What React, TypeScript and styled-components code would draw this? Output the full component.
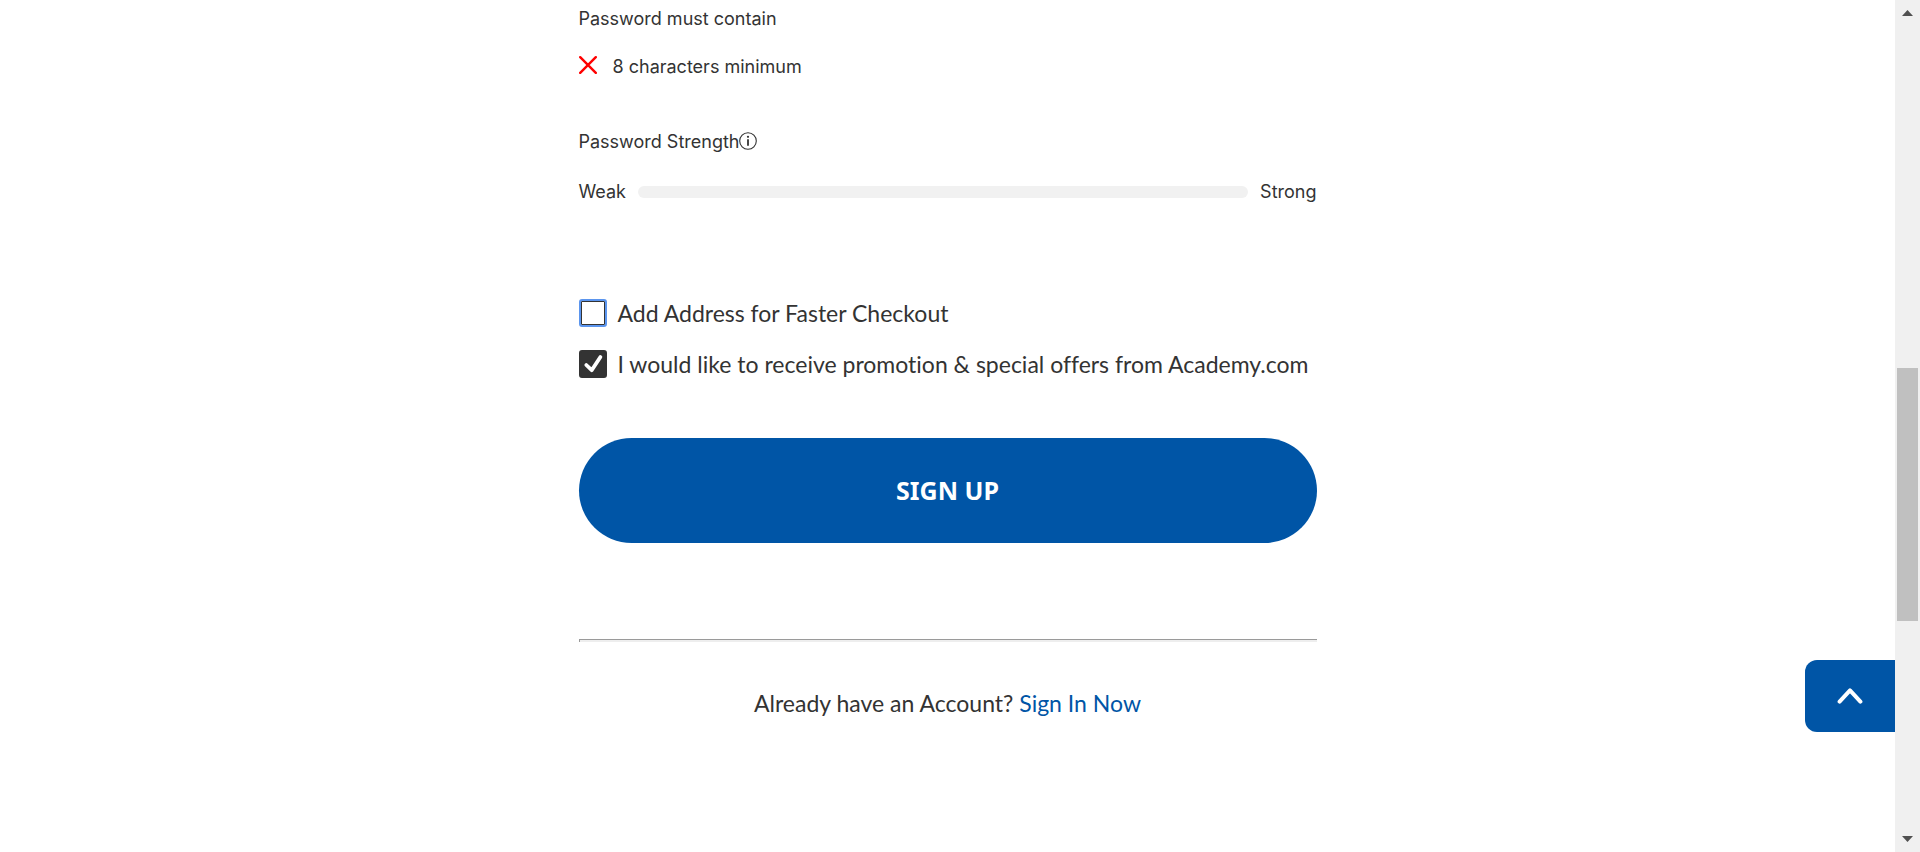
import React, { useState } from "react";
import styled, { createGlobalStyle } from "styled-components";

const blue = "#0055a6";
const ink = "#333333";

const GlobalStyle = createGlobalStyle`
  *, *::before, *::after { box-sizing: border-box; }
  body {
    margin: 0;
    background: #fff;
    color: ${ink};
    font-family: Lato, "Noto Sans", sans-serif;
    font-variant-ligatures: none;
  }
`;

const Page = styled.div`
  display: flex;
  align-items: flex-start;
`;

const Content = styled.main`
  flex: 1;
  min-width: 0;
  padding: 5px 24px 0;
`;

const Form = styled.form`
  max-width: 738px;
  margin: 0 auto;
`;

const SmallText = styled.p`
  margin: 0;
  font-family: Inter, "Noto Sans", sans-serif;
  font-size: 18px;
  line-height: 28px;
`;

const PasswordRules = styled.section`
  display: flex;
  flex-direction: column;
  gap: 20px;
`;

const Rule = styled.div`
  display: flex;
  align-items: center;
  gap: 16px;
`;

const CrossIcon = styled.svg`
  width: 18px;
  height: 18px;
  margin-bottom: 4px;
  fill: none;
  stroke: #ff0000;
  stroke-width: 2.4;
  stroke-linecap: round;
`;

const Strength = styled.section`
  display: flex;
  flex-direction: column;
  gap: 22px;
  margin-top: 47px;
`;

const StrengthTitle = styled.div`
  display: flex;
  align-items: center;
`;

const InfoButton = styled.button`
  display: flex;
  padding: 0 0 2px;
  border: 0;
  background: none;
  color: ${ink};
`;

const Meter = styled.div`
  display: flex;
  align-items: center;
  gap: 12px;
`;

const MeterTrack = styled.div`
  flex: 1;
  height: 12px;
  border-radius: 6px;
  background: #f1f1f1;
`;

const Options = styled.section`
  display: flex;
  flex-direction: column;
  gap: 23px;
  margin-top: 93px;
`;

const Option = styled.label`
  display: flex;
  align-items: center;
  gap: 11px;
  font-size: 23px;
  line-height: 28px;
`;

const Tick = styled.span`
  position: relative;
  flex: none;
  width: 28px;
  height: 28px;
`;

const TickInput = styled.input<{ $ring?: boolean }>`
  appearance: none;
  display: block;
  width: 28px;
  height: 28px;
  margin: 0;
  border: 2px solid ${(p) => (p.$ring ? "#5b95ee" : ink)};
  border-radius: 3px;
  background: #fff;
  box-shadow: inset 0 0 0 1px ${ink};
  outline: none;

  &:checked {
    border-color: ${ink};
    background: ${ink};
  }
`;

const TickMark = styled.svg`
  position: absolute;
  inset: 0;
  pointer-events: none;
`;

const SubmitButton = styled.button`
  display: block;
  width: 100%;
  margin-top: 60px;
  padding: 35px 24px;
  border: 0;
  border-radius: 53px;
  background: ${blue};
  color: #fff;
  font-family: "Noto Sans", sans-serif;
  font-size: 25px;
  font-weight: 700;
  line-height: 35px;
`;

const Divider = styled.hr`
  height: 3px;
  margin: 96px 0 0;
  border: 0;
  border-top: 1px solid #9a9a9a;
  border-left: 1px solid #9a9a9a;
  background: #eeeeee;
`;

const AccountPrompt = styled.p`
  margin: 47px 0 0;
  text-align: center;
  font-size: 23px;
  line-height: 28px;
`;

const SignInLink = styled.a`
  color: ${blue};
  text-decoration: none;
`;

const BackToTop = styled.button`
  position: fixed;
  right: 25px;
  bottom: 120px;
  display: grid;
  place-items: center;
  width: 90px;
  height: 72px;
  padding: 0;
  border: 0;
  border-radius: 12px 0 0 12px;
  background: ${blue};
`;

const Scrollbar = styled.aside`
  position: sticky;
  top: 0;
  display: flex;
  flex-direction: column;
  flex: none;
  width: 25px;
  height: 100vh;
  background: #f0f0f0;
`;

const ScrollArrow = styled.button`
  display: grid;
  place-items: center;
  height: 26px;
  padding: 0;
  border: 0;
  background: none;
`;

const ScrollGap = styled.div<{ $share: number }>`
  flex: ${(p) => p.$share} 1 0;
`;

const ScrollThumb = styled(ScrollGap)`
  margin: 0 2px;
  background: #c0c0c0;
`;

type CheckOptionProps = { label: string; initial?: boolean; ring?: boolean };

function CheckOption({ label, initial = false, ring }: CheckOptionProps) {
  const [checked, setChecked] = useState(initial);
  return (
    <Option>
      <Tick>
        <TickInput type="checkbox" $ring={ring} checked={checked} onChange={(e) => setChecked(e.target.checked)} />
        {checked && (
          <TickMark width="28" height="28" viewBox="0 0 28 28" aria-hidden="true">
            <path d="M7.3 15l5.4 5.2L21.4 7" fill="none" stroke="#fff" strokeWidth="3.8" strokeLinecap="round" strokeLinejoin="round" />
          </TickMark>
        )}
      </Tick>
      {label}
    </Option>
  );
}

export default function App() {
  return (
    <>
      <GlobalStyle />
      <Page>
        <Content>
          <Form onSubmit={(e) => e.preventDefault()}>
            <PasswordRules>
              <SmallText>Password must contain</SmallText>
              <Rule>
                <CrossIcon viewBox="0 0 18 18" aria-hidden="true">
                  <path d="M1.2 1.2l15.6 15.6M16.8 1.2L1.2 16.8" />
                </CrossIcon>
                <SmallText>8 characters minimum</SmallText>
              </Rule>
            </PasswordRules>
            <Strength>
              <StrengthTitle>
                <SmallText>Password Strength</SmallText>
                <InfoButton type="button" aria-label="About password strength">
                  <svg width="18" height="18" viewBox="0 0 18 18" aria-hidden="true">
                    <circle cx="9" cy="9" r="8.3" fill="none" stroke="currentColor" strokeWidth="1.1" />
                    <circle cx="9" cy="4.8" r="1.1" fill="currentColor" />
                    <path d="M9 7.2v6.6" stroke="currentColor" strokeWidth="1.8" />
                  </svg>
                </InfoButton>
              </StrengthTitle>
              <Meter>
                <SmallText>Weak</SmallText>
                <MeterTrack />
                <SmallText>Strong</SmallText>
              </Meter>
            </Strength>
            <Options>
              <CheckOption label="Add Address for Faster Checkout" ring />
              <CheckOption label="I would like to receive promotion & special offers from Academy.com" initial />
            </Options>
            <SubmitButton type="submit">SIGN UP</SubmitButton>
            <Divider />
            <AccountPrompt>
              Already have an Account? <SignInLink href="#sign-in">Sign In Now</SignInLink>
            </AccountPrompt>
          </Form>
        </Content>
        <Scrollbar>
          <ScrollArrow type="button" aria-label="Scroll up">
            <svg width="11" height="6" viewBox="0 0 11 6" aria-hidden="true">
              <path d="M0 6L5.5 0L11 6z" fill="#505050" />
            </svg>
          </ScrollArrow>
          <ScrollGap $share={342} />
          <ScrollThumb $share={253} />
          <ScrollGap $share={205} />
          <ScrollArrow type="button" aria-label="Scroll down">
            <svg width="11" height="6" viewBox="0 0 11 6" aria-hidden="true">
              <path d="M0 0L5.5 6L11 0z" fill="#505050" />
            </svg>
          </ScrollArrow>
        </Scrollbar>
      </Page>
      <BackToTop type="button" aria-label="Back to top">
        <svg width="26" height="18" viewBox="0 0 26 18" aria-hidden="true">
          <path d="M2.6 14.6L13 3.4L23.4 14.6" fill="none" stroke="#fff" strokeWidth="4" strokeLinecap="round" strokeLinejoin="round" />
        </svg>
      </BackToTop>
    </>
  );
}
